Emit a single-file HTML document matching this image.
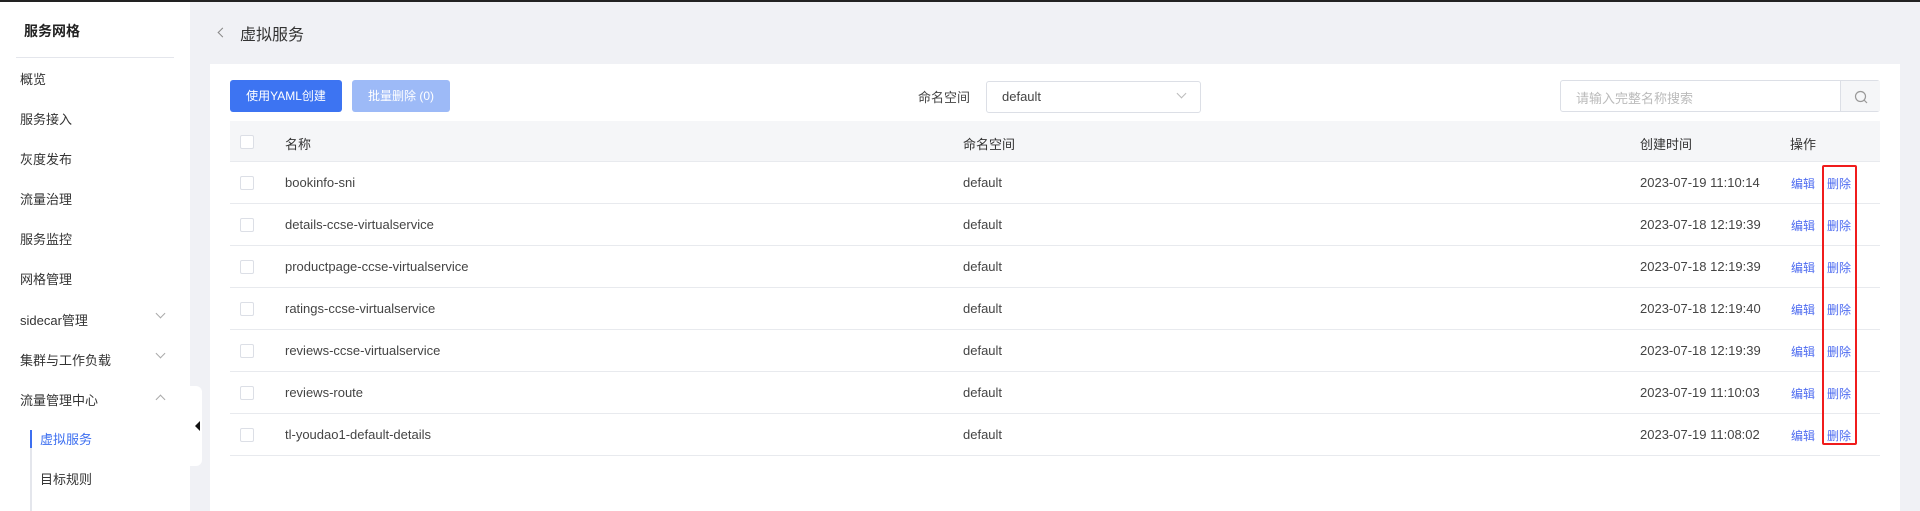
<!DOCTYPE html><html><head><meta charset="utf-8"><style>
*{box-sizing:border-box;margin:0;padding:0}
body{width:1920px;height:511px;overflow:hidden;background:#f0f1f5;font-family:"Liberation Sans","Noto Sans CJK SC",sans-serif;position:relative;color:#333}
.a{position:absolute;white-space:nowrap}
.side{position:absolute;left:0;top:2px;width:190px;height:509px;background:#fff}
.mi{position:absolute;left:20px;font-size:13px;color:#333}
.chev{position:absolute;left:157px;width:7px;height:7px;border-right:1px solid #aaa;border-bottom:1px solid #aaa}
.card{position:absolute;left:210px;top:64px;width:1690px;height:447px;background:#fff}
.row{position:absolute;left:230px;width:1650px;height:42px;border-bottom:1px solid #e8eaee;font-size:13px;color:#444}
.row span{position:absolute;top:13px}
.cb{position:absolute;left:10px;top:14px;width:14px;height:14px;border:1px solid #dcdfe6;border-radius:2px;background:#fff}
.lk{color:#4d6bf0;font-size:12px}
</style></head><body>
<div class="a" style="left:0;top:0;width:1920px;height:2px;background:#222"></div>
<div class="side">
<div class="a" style="left:24px;top:19px;font-size:14px;font-weight:bold;color:#222">服务网格</div>
<div class="a" style="left:16px;top:55px;width:158px;height:1px;background:#e4e6ec"></div>
<div class="mi a" style="top:67px">概览</div>
<div class="mi a" style="top:107px">服务接入</div>
<div class="mi a" style="top:147px">灰度发布</div>
<div class="mi a" style="top:187px">流量治理</div>
<div class="mi a" style="top:227px">服务监控</div>
<div class="mi a" style="top:267px">网格管理</div>
<div class="mi a" style="top:308px">sidecar管理</div>
<div class="chev" style="top:308px;transform:rotate(45deg)"></div>
<div class="mi a" style="top:348px">集群与工作负载</div>
<div class="chev" style="top:348px;transform:rotate(45deg)"></div>
<div class="mi a" style="top:388px">流量管理中心</div>
<div class="chev" style="top:394px;transform:rotate(225deg)"></div>
<div class="a" style="left:30px;top:428px;width:2px;height:81px;background:#e4e6ec"></div>
<div class="a" style="left:30px;top:428px;width:2px;height:18px;background:#3d6ff0"></div>
<div class="a" style="left:40px;top:427px;font-size:13px;color:#3d6ff0">虚拟服务</div>
<div class="a" style="left:40px;top:467px;font-size:13px;color:#333">目标规则</div>
</div>
<div class="a" style="left:190px;top:386px;width:12px;height:80px;background:#fff;border-radius:0 6px 6px 0"></div>
<div class="a" style="left:195px;top:421px;width:0;height:0;border-top:5px solid transparent;border-bottom:5px solid transparent;border-right:5px solid #111"></div>
<div class="a" style="left:219px;top:29px;width:7px;height:7px;border-left:1px solid #888;border-bottom:1px solid #888;transform:rotate(45deg)"></div>
<div class="a" style="left:240px;top:21px;font-size:16px;color:#333">虚拟服务</div>
<div class="card"></div>
<div class="a" style="left:230px;top:80px;width:112px;height:32px;background:#3d74f2;border-radius:3px;color:#fff;font-size:12px;text-align:center;line-height:32px">使用YAML创建</div>
<div class="a" style="left:352px;top:80px;width:98px;height:32px;background:#9dbaf7;border-radius:3px;color:#fff;font-size:12px;text-align:center;line-height:32px">批量删除 (0)</div>
<div class="a" style="left:918px;top:87px;font-size:13px;color:#444">命名空间</div>
<div class="a" style="left:986px;top:81px;width:215px;height:32px;border:1px solid #dcdfe6;border-radius:3px;background:#fff"><span class="a" style="left:15px;top:7px;font-size:13px;color:#444">default</span><span class="a" style="left:191px;top:8px;width:7px;height:7px;border-right:1px solid #bbb;border-bottom:1px solid #bbb;transform:rotate(45deg)"></span></div>
<div class="a" style="left:1560px;top:80px;width:320px;height:32px;border:1px solid #dcdfe6;border-radius:3px;background:#fff"><span class="a" style="left:15px;top:7px;font-size:13px;color:#bbb">请输入完整名称搜索</span><span class="a" style="left:279px;top:0;width:40px;height:30px;background:#f5f6f8;border-left:1px solid #dcdfe6"></span><svg class="a" style="left:293px;top:9px" width="14" height="14" viewBox="0 0 14 14"><circle cx="6.5" cy="6.5" r="5" fill="none" stroke="#999" stroke-width="1.2"/><path d="M10 10l3 3" stroke="#999" stroke-width="1.2"/></svg></div>
<div class="row" style="top:121px;background:#f5f6f8;height:41px;color:#333"><div class="cb"></div><span style="left:55px">名称</span><span style="left:733px">命名空间</span><span style="left:1410px">创建时间</span><span style="left:1560px">操作</span></div>
<div class="row" style="top:162px"><div class="cb"></div><span style="left:55px">bookinfo-sni</span><span style="left:733px">default</span><span style="left:1410px">2023-07-19 11:10:14</span><span class="lk" style="left:1561px">编辑</span><span class="lk" style="left:1597px">删除</span></div>
<div class="row" style="top:204px"><div class="cb"></div><span style="left:55px">details-ccse-virtualservice</span><span style="left:733px">default</span><span style="left:1410px">2023-07-18 12:19:39</span><span class="lk" style="left:1561px">编辑</span><span class="lk" style="left:1597px">删除</span></div>
<div class="row" style="top:246px"><div class="cb"></div><span style="left:55px">productpage-ccse-virtualservice</span><span style="left:733px">default</span><span style="left:1410px">2023-07-18 12:19:39</span><span class="lk" style="left:1561px">编辑</span><span class="lk" style="left:1597px">删除</span></div>
<div class="row" style="top:288px"><div class="cb"></div><span style="left:55px">ratings-ccse-virtualservice</span><span style="left:733px">default</span><span style="left:1410px">2023-07-18 12:19:40</span><span class="lk" style="left:1561px">编辑</span><span class="lk" style="left:1597px">删除</span></div>
<div class="row" style="top:330px"><div class="cb"></div><span style="left:55px">reviews-ccse-virtualservice</span><span style="left:733px">default</span><span style="left:1410px">2023-07-18 12:19:39</span><span class="lk" style="left:1561px">编辑</span><span class="lk" style="left:1597px">删除</span></div>
<div class="row" style="top:372px"><div class="cb"></div><span style="left:55px">reviews-route</span><span style="left:733px">default</span><span style="left:1410px">2023-07-19 11:10:03</span><span class="lk" style="left:1561px">编辑</span><span class="lk" style="left:1597px">删除</span></div>
<div class="row" style="top:414px"><div class="cb"></div><span style="left:55px">tl-youdao1-default-details</span><span style="left:733px">default</span><span style="left:1410px">2023-07-19 11:08:02</span><span class="lk" style="left:1561px">编辑</span><span class="lk" style="left:1597px">删除</span></div>
<div class="a" style="left:1822px;top:165px;width:35px;height:280px;border:2px solid #f01c1c;border-radius:2px"></div>
</body></html>
